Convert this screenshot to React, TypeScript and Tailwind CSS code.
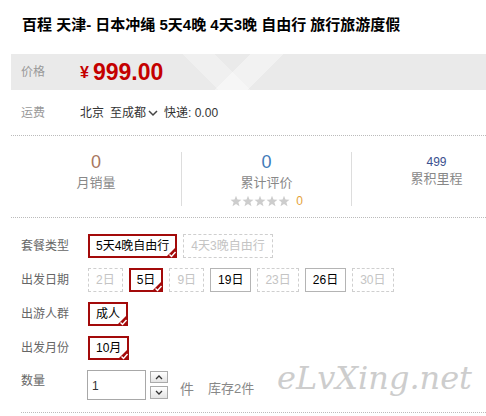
import React from "react";

const font = "font-['Liberation_Sans','Noto_Sans_CJK_SC',sans-serif]";

type Opt = { label: string; state: "on" | "off" | "none" };

const packages: Opt[] = [
  { label: "5天4晚自由行", state: "on" },
  { label: "4天3晚自由行", state: "none" },
];

const dates: Opt[] = [
  { label: "2日", state: "none" },
  { label: "5日", state: "on" },
  { label: "9日", state: "none" },
  { label: "19日", state: "off" },
  { label: "23日", state: "none" },
  { label: "26日", state: "off" },
  { label: "30日", state: "none" },
];

const Tick = () => (
  <svg className="absolute -right-[2px] -bottom-[2px]" width="12" height="12" viewBox="0 0 12 12">
    <polygon points="12,0 12,12 0,12" fill="#a30a0a" />
    <polyline points="4.5,8.5 6.5,10.5 10.5,6" fill="none" stroke="#fff" strokeWidth="1.4" />
  </svg>
);

const Option: React.FC<{ opt: Opt }> = ({ opt }) => {
  if (opt.state === "on") {
    return (
      <span className="relative h-[24px] px-[6px] flex items-center border-2 border-[#a30a0a] text-black text-[12px] mr-[6px]">
        {opt.label}
        <Tick />
      </span>
    );
  }
  if (opt.state === "off") {
    return (
      <span className="h-[24px] px-[7px] flex items-center border border-[#b4b4b4] text-black text-[12px] mr-[6px]">
        {opt.label}
      </span>
    );
  }
  return (
    <span className="h-[24px] px-[7px] flex items-center border border-dashed border-[#cfcfcf] text-[#c4c4c4] text-[12px] mr-[6px]">
      {opt.label}
    </span>
  );
};

const Row: React.FC<{ label: string; children: React.ReactNode }> = ({ label, children }) => (
  <div className="flex items-center h-[24px] mb-[10px]">
    <span className="w-[67px] text-[12px] text-[#666]">{label}</span>
    <div className="flex items-center">{children}</div>
  </div>
);

const Star = () => (
  <svg width="12" height="12" viewBox="0 0 24 24">
    <polygon points="12,1.5 15,9 23,9.3 16.8,14.3 19,22.5 12,17.8 5,22.5 7.2,14.3 1,9.3 9,9" fill="#cdcdcd" />
  </svg>
);

export default function App() {
  return (
    <div className={`w-[486px] h-[416px] overflow-hidden bg-white ${font}`}>
      <div className="w-[520px] pl-[11px]">
        <h1 className="h-[54px] pl-[11px] pt-[14px] text-[15px] font-bold text-black leading-[22px]">
          百程 天津- 日本冲绳 5天4晚 4天3晚 自由行 旅行旅游度假
        </h1>

        <div className="h-[36px] flex items-center bg-[#eaeaea] bg-[linear-gradient(135deg,transparent_44%,rgba(255,255,255,0.4)_44%,rgba(255,255,255,0.4)_50%,transparent_50%),linear-gradient(45deg,transparent_38%,rgba(255,255,255,0.3)_38%,rgba(255,255,255,0.3)_44%,transparent_44%)]">
          <span className="w-[69px] pl-[10px] text-[12px] text-[#999]">价格</span>
          <span className="text-[#c40000] text-[16px] font-bold mr-[4px] mt-[2px]">¥</span>
          <span className="text-[#c40000] text-[23px] font-bold leading-none">999.00</span>
        </div>

        <div className="h-[46px] flex items-center border-b border-dotted border-[#bbb] text-[12px]">
          <span className="w-[69px] pl-[10px] text-[#999]">运费</span>
          <span className="text-[#333]">北京</span>
          <span className="text-[#333] ml-[6px]">至成都</span>
          <svg className="ml-[2px] mr-[6px]" width="10" height="8" viewBox="0 0 10 8">
            <polyline points="1,2 5,6 9,2" fill="none" stroke="#444" strokeWidth="1.5" />
          </svg>
          <span className="text-[#333]">快递: 0.00</span>
        </div>

        <div className="grid grid-cols-[170px_170px_170px] pt-[16px] pb-[11px] border-b border-dotted border-[#bbb]">
          <div className="h-[54px] flex flex-col items-center">
            <span className="text-[18px] leading-[20px] text-[#a8765e]">0</span>
            <span className="text-[13px] leading-[20px] text-[#888] mt-[1px]">月销量</span>
          </div>
          <div className="h-[54px] flex flex-col items-center border-l border-[#ddd]">
            <span className="text-[18px] leading-[20px] text-[#3f7bb8]">0</span>
            <span className="text-[13px] leading-[20px] text-[#888] mt-[1px]">累计评价</span>
            <div className="flex items-center mt-[2px]">
              <Star />
              <Star />
              <Star />
              <Star />
              <Star />
              <span className="ml-[6px] text-[12px] leading-[12px] text-[#e5a33a]">0</span>
            </div>
          </div>
          <div className="h-[54px] flex flex-col items-center border-l border-[#ddd]">
            <span className="text-[12px] leading-[16px] mt-[2px] text-[#3b4f8e]">499</span>
            <span className="text-[13px] leading-[18px] text-[#888]">累积里程</span>
          </div>
        </div>

        <div className="relative ml-[10px] pt-[16px] pb-[12px] border-b border-dotted border-[#bbb]">
          <Row label="套餐类型">
            {packages.map((o) => (
              <Option key={o.label} opt={o} />
            ))}
          </Row>
          <Row label="出发日期">
            {dates.map((o) => (
              <Option key={o.label} opt={o} />
            ))}
          </Row>
          <Row label="出游人群">
            <Option opt={{ label: "成人", state: "on" }} />
          </Row>
          <Row label="出发月份">
            <Option opt={{ label: "10月", state: "on" }} />
          </Row>

          <div className="flex items-start mt-[3px] text-[12px]">
            <span className="w-[66px] pt-[2px] text-[#666]">数量</span>
            <div className="w-[59px] h-[30px] border border-[#a8a8a8] flex items-center pl-[4px] pt-[2px] text-[#333]">1</div>
            <div className="flex flex-col ml-[4px] gap-[3px] pt-[1px]">
              <span className="w-[18px] h-[12px] border border-[#aaa] bg-[linear-gradient(#fff,#e4e4e4)] flex items-center justify-center">
                <svg width="8" height="5" viewBox="0 0 8 5">
                  <polyline points="1,4 4,1 7,4" fill="none" stroke="#333" strokeWidth="1.3" />
                </svg>
              </span>
              <span className="w-[18px] h-[13px] border border-[#aaa] bg-[linear-gradient(#fff,#e4e4e4)] flex items-center justify-center">
                <svg width="8" height="5" viewBox="0 0 8 5">
                  <polyline points="1,1 4,4 7,1" fill="none" stroke="#333" strokeWidth="1.3" />
                </svg>
              </span>
            </div>
            <span className="ml-[12px] mt-[9px] text-[14px] text-[#888]">件</span>
            <span className="ml-[14px] mt-[9px] text-[13px] text-[#888]">库存2件</span>
          </div>

          <span className="absolute left-[256px] bottom-[10px] text-[32px] italic text-[#cdcdcd] font-['DejaVu_Serif',serif]">
            eLvXing.net
          </span>
        </div>
      </div>
    </div>
  );
}
